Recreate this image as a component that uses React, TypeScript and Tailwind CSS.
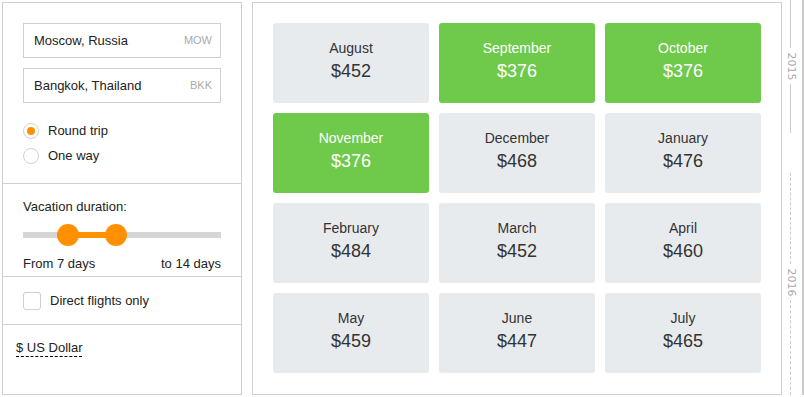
import { useState } from "react";

type Month = { name: string; price: number; cheap?: boolean };

const months: Month[] = [
  { name: "August", price: 452 },
  { name: "September", price: 376, cheap: true },
  { name: "October", price: 376, cheap: true },
  { name: "November", price: 376, cheap: true },
  { name: "December", price: 468 },
  { name: "January", price: 476 },
  { name: "February", price: 484 },
  { name: "March", price: 452 },
  { name: "April", price: 460 },
  { name: "May", price: 459 },
  { name: "June", price: 447 },
  { name: "July", price: 465 },
];

export default function App() {
  const [roundTrip, setRoundTrip] = useState(true);
  const [direct, setDirect] = useState(false);

  return (
    <div className="flex h-[397px] w-[804px] bg-white pl-[2px] pt-[2px] text-[#222]" style={{ fontFamily: '"Liberation Sans", Arial, sans-serif' }}>
      <aside className="flex h-[393px] w-[240px] flex-col border border-[#d0d0d0]">
        <div className="flex h-[180px] flex-col px-5 pt-5">
          <CityInput city="Moscow, Russia" code="MOW" />
          <div className="mt-[10px]">
            <CityInput city="Bangkok, Thailand" code="BKK" />
          </div>
          <div className="mt-5 flex flex-col gap-[9px]">
            <Radio label="Round trip" checked={roundTrip} onClick={() => setRoundTrip(true)} />
            <Radio label="One way" checked={!roundTrip} onClick={() => setRoundTrip(false)} />
          </div>
        </div>

        <div className="h-[93px] border-t border-[#d0d0d0] px-5 pt-[15px]">
          <div className="text-[13px] leading-[16px]">Vacation duration:</div>
          <div className="relative mt-[9px] h-[22px]">
            <div className="absolute left-0 right-0 top-[8px] h-[6px] bg-[#d6d6d6]" />
            <div className="absolute left-[45px] top-[8px] h-[6px] w-[48px] bg-[#ff9100]" />
            <div className="absolute left-[34px] top-0 h-[22px] w-[22px] rounded-full bg-[#ff9100]" />
            <div className="absolute left-[82px] top-0 h-[22px] w-[22px] rounded-full bg-[#ff9100]" />
          </div>
          <div className="mt-[10px] flex justify-between text-[13px] leading-[16px]">
            <span>From 7 days</span>
            <span>to 14 days</span>
          </div>
        </div>

        <label className="flex h-[48px] cursor-pointer items-center gap-[9px] border-t border-[#d0d0d0] px-5">
          <span
            onClick={() => setDirect(!direct)}
            className="flex h-[18px] w-[18px] items-center justify-center rounded-[3px] border border-[#d0d0d0] bg-white text-[12px] text-[#ff9100]"
          >
            {direct ? "✓" : ""}
          </span>
          <span className="text-[13px]">Direct flights only</span>
        </label>

        <div className="flex-1 border-t border-[#d0d0d0] px-[13px] pt-[10px]">
          <span className="border-b border-dashed border-black pb-[1px] text-[13px] leading-[16px]">$ US Dollar</span>
        </div>
      </aside>

      <main className="ml-[10px] h-[393px] w-[530px] border border-[#d0d0d0] p-5">
        <div className="grid grid-cols-3 gap-[10px]">
          {months.map((m) => (
            <MonthCard key={m.name} month={m} />
          ))}
        </div>
      </main>

      <Timeline />
    </div>
  );
}

function CityInput({ city, code }: { city: string; code: string }) {
  return (
    <div className="flex h-[35px] items-center justify-between border border-[#d0d0d0] pl-[10px] pr-[8px]">
      <span className="text-[13px]">{city}</span>
      <span className="text-[11px] text-[#aaa]">{code}</span>
    </div>
  );
}

function Radio({ label, checked, onClick }: { label: string; checked: boolean; onClick: () => void }) {
  return (
    <button type="button" onClick={onClick} className="flex items-center gap-[9px] text-left">
      <span className="flex h-4 w-4 items-center justify-center rounded-full border border-[#d0d0d0] bg-white">
        {checked && <span className="h-2 w-2 rounded-full bg-[#ff9100]" />}
      </span>
      <span className="text-[13px] leading-4">{label}</span>
    </button>
  );
}

function MonthCard({ month }: { month: Month }) {
  return (
    <div
      className={`flex h-[80px] flex-col items-center justify-center rounded-[3px] pb-[6px] ${
        month.cheap ? "bg-[#6fc94a] text-white" : "bg-[#e8ebee] text-[#333]"
      }`}
    >
      <div className="text-[14px] leading-[18px]">{month.name}</div>
      <div className="mt-[3px] text-[18px] leading-[22px]">${month.price}</div>
    </div>
  );
}

function Timeline() {
  return (
    <div className="flex h-[395px] w-[22px] -translate-y-[2px]">
      <div className="flex w-[17px] flex-col items-center">
        <div className="h-[48px] w-px bg-[#ccc]" />
        <YearLabel year="2015" />
        <div className="h-[49px] w-px bg-[#ccc]" />
        <div className="h-[40px]" />
        <div className="h-[91px] border-l border-dashed border-[#ccc]" />
        <YearLabel year="2016" />
        <div className="flex-1 border-l border-dashed border-[#ccc]" />
      </div>
      <div className="ml-auto h-full w-[2px] bg-[#ccc]" />
    </div>
  );
}

function YearLabel({ year }: { year: string }) {
  return (
    <div className="flex h-[36px] items-center justify-center">
      <span
        className="rotate-90 text-[11px] leading-none text-[#aaa]"
        style={{ fontFamily: '"DejaVu Sans", sans-serif' }}
      >
        {year}
      </span>
    </div>
  );
}
